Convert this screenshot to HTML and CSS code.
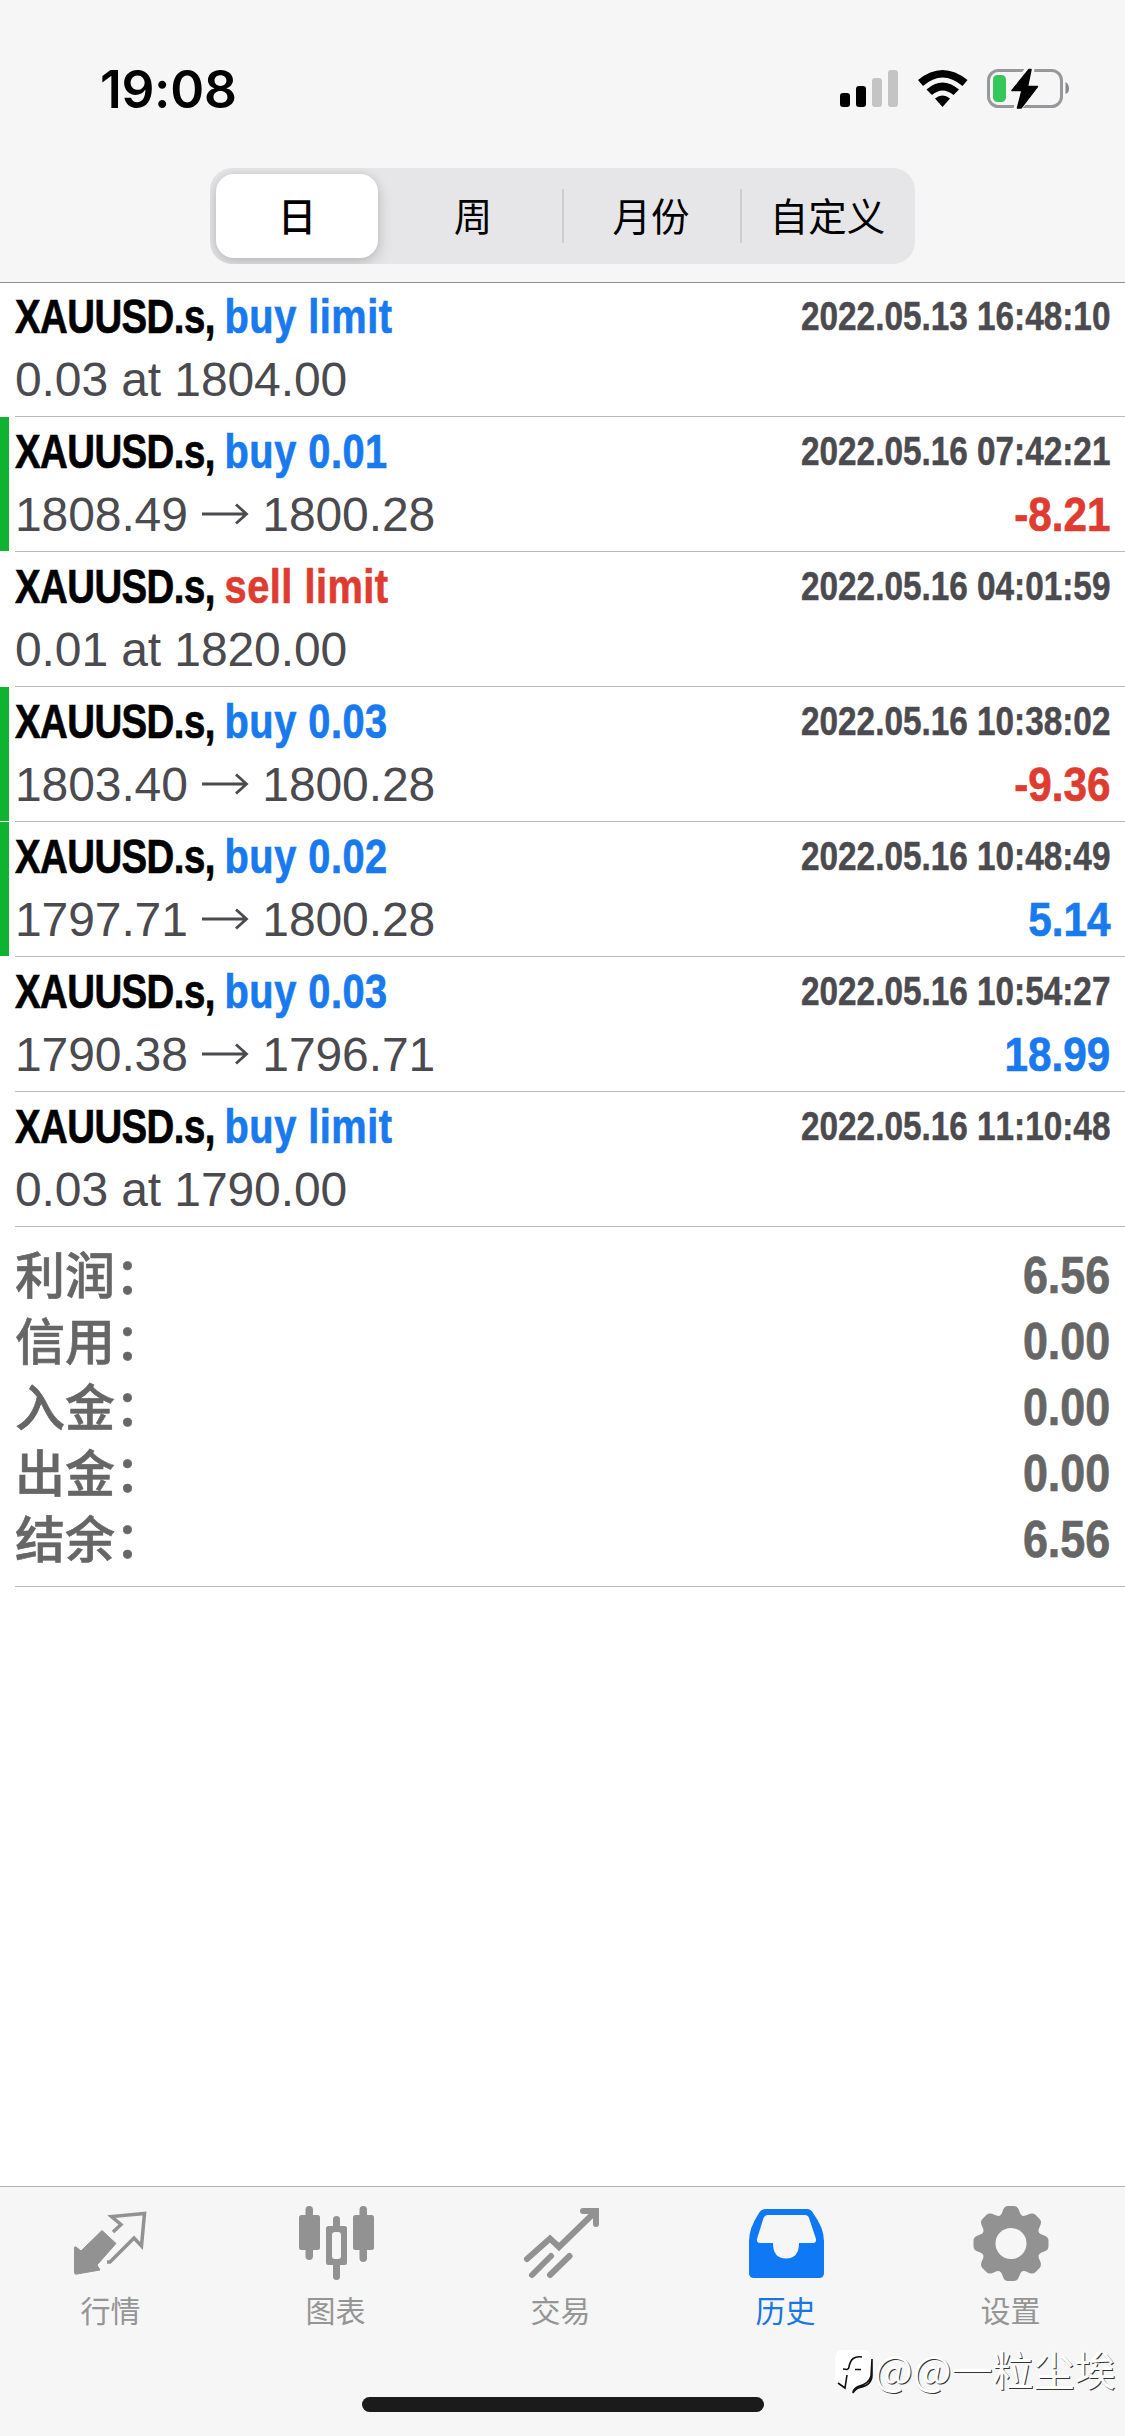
FILE: index.html
```html
<!DOCTYPE html>
<html lang="zh-CN">
<head>
<meta charset="utf-8">
<title>历史</title>
<link rel="stylesheet" href="styles.css">
</head>
<body>
<div class="screen">
  <header class="top">
    <div class="status">
      <span class="clock">19:08</span>
      <svg class="status-icons" width="232" height="48" viewBox="838 66 232 48">
        <rect x="840" y="93" width="10" height="14" rx="3"/>
        <rect x="856" y="86" width="10" height="21" rx="3"/>
        <rect x="872" y="78" width="10" height="29" rx="3" fill="#c4c4c5"/>
        <rect x="888" y="70" width="10" height="37" rx="3" fill="#c4c4c5"/>
        <path d="M918 80Q942.500 60 967.500 80L962.500 86Q942.500 69 923 86Z"/>
        <path d="M926.500 89.500Q942.500 75.500 959 89.500L953.500 95Q942.500 86 932 95Z"/>
        <path d="M935 98.500Q942.500 92.500 950 98.500L942.500 107Z"/>
        <rect x="988.500" y="70.500" width="73" height="36" rx="10" fill="none" stroke="#98989b" stroke-width="3"/>
        <path d="M1065.500 82Q1069 84 1069 88.500T1065.500 94Z" fill="#88888a"/>
        <path d="M1029 69L1012 91H1021L1017 109L1038 86H1029L1031 69Z" fill="#f6f6f6" stroke="#f6f6f6" stroke-width="7"/>
        <rect x="993" y="75" width="13" height="27" rx="4.500" fill="#35c759"/>
        <path d="M1029 69.500L1012 90.500H1022L1017.500 108H1021L1037.500 86.500H1027.500L1031 69.500Z" stroke="#000" stroke-width="1.500" stroke-linejoin="round"/>
      </svg>
    </div>
    <nav class="segments">
      <span class="seg on">日</span><span class="seg">周</span><span class="seg line">月份</span><span class="seg line">自定义</span>
    </nav>
  </header>

  <main class="list">
    <div class="deal"><div class="row"><div class="title"><b>XAUUSD.s, </b><i class="buy">buy limit</i></div><time>2022.05.13 16:48:10</time></div><div class="row"><span class="price">0.03 at 1804.00</span></div></div>
    <div class="deal mark"><div class="row"><div class="title"><b>XAUUSD.s, </b><i class="buy">buy 0.01</i></div><time>2022.05.16 07:42:21</time></div><div class="row"><span class="price">1808.49 <svg class="arrow" width="48" height="22" viewBox="0 0 48 22"><path d="M1 11H46M35 1.500L45.500 11L35 20.500"/></svg> 1800.28</span><em class="loss">-8.21</em></div></div>
    <div class="deal"><div class="row"><div class="title"><b>XAUUSD.s, </b><i class="sell">sell limit</i></div><time>2022.05.16 04:01:59</time></div><div class="row"><span class="price">0.01 at 1820.00</span></div></div>
    <div class="deal mark"><div class="row"><div class="title"><b>XAUUSD.s, </b><i class="buy">buy 0.03</i></div><time>2022.05.16 10:38:02</time></div><div class="row"><span class="price">1803.40 <svg class="arrow" width="48" height="22" viewBox="0 0 48 22"><path d="M1 11H46M35 1.500L45.500 11L35 20.500"/></svg> 1800.28</span><em class="loss">-9.36</em></div></div>
    <div class="deal mark"><div class="row"><div class="title"><b>XAUUSD.s, </b><i class="buy">buy 0.02</i></div><time>2022.05.16 10:48:49</time></div><div class="row"><span class="price">1797.71 <svg class="arrow" width="48" height="22" viewBox="0 0 48 22"><path d="M1 11H46M35 1.500L45.500 11L35 20.500"/></svg> 1800.28</span><em>5.14</em></div></div>
    <div class="deal"><div class="row"><div class="title"><b>XAUUSD.s, </b><i class="buy">buy 0.03</i></div><time>2022.05.16 10:54:27</time></div><div class="row"><span class="price">1790.38 <svg class="arrow" width="48" height="22" viewBox="0 0 48 22"><path d="M1 11H46M35 1.500L45.500 11L35 20.500"/></svg> 1796.71</span><em>18.99</em></div></div>
    <div class="deal"><div class="row"><div class="title"><b>XAUUSD.s, </b><i class="buy">buy limit</i></div><time>2022.05.16 11:10:48</time></div><div class="row"><span class="price">0.03 at 1790.00</span></div></div>
    <div class="summary">
      <div class="sum"><span>利润：</span><strong>6.56</strong></div>
      <div class="sum"><span>信用：</span><strong>0.00</strong></div>
      <div class="sum"><span>入金：</span><strong>0.00</strong></div>
      <div class="sum"><span>出金：</span><strong>0.00</strong></div>
      <div class="sum"><span>结余：</span><strong>6.56</strong></div>
    </div>
  </main>

  <footer class="bottom">
    <nav class="tabs">
      <div class="tab"><svg width="80" height="80" viewBox="72 2203 80 80">
        <path d="M77 2247L82 2251L103 2230.500L117 2243.500L98 2265L101 2270L78 2274Q75.500 2275 75.500 2272V2247Z" fill="#929292" stroke="#929292" stroke-width="1"/>
        <path d="M114 2232L122 2224.500L112.500 2216.500L145.500 2213.500L142.500 2246L135 2238L111 2262H108" fill="none" stroke="#929292" stroke-width="3.500"/>
      </svg><span>行情</span></div>
      <div class="tab"><svg width="80" height="80" viewBox="296 2203 80 80" fill="#929292">
        <rect x="305.500" y="2206" width="7.500" height="54" rx="3.700"/><rect x="299" y="2215" width="21" height="35" rx="2.500"/>
        <rect x="359.500" y="2206" width="7.500" height="56" rx="3.700"/><rect x="353" y="2215" width="21" height="35" rx="2.500"/>
        <rect x="333" y="2216" width="7" height="64" rx="3.500"/><rect x="326" y="2226" width="21" height="39" rx="2.500"/><rect x="332" y="2232" width="9" height="27" rx="3" fill="#f6f6f6"/>
      </svg><span>图表</span></div>
      <div class="tab"><svg width="80" height="80" viewBox="521 2203 80 80" fill="none" stroke="#929292" stroke-width="6" stroke-linecap="round">
        <path d="M527 2259L550 2238.500L559 2247L595 2212"/><path d="M583 2211H596V2224"/>
        <path d="M551 2256L532 2275"/><path d="M569.500 2256L550 2275"/>
      </svg><span>交易</span></div>
      <div class="tab active"><svg width="80" height="80" viewBox="746 2203 80 80">
        <path fill-rule="evenodd" fill="#0e78f5" d="M766 2209H807Q811 2209 813 2213Q824 2228 824 2241V2273Q824 2278 819 2278H754Q749 2278 749 2273V2241Q749 2228 759 2213Q761 2209 766 2209ZM768 2215Q765 2215 763.500 2218L757 2239Q756.500 2243 760 2243H773Q773 2258.500 786 2258.500T799 2243H813Q816.500 2243 816 2239L809 2218Q808 2215 805 2215Z"/>
      </svg><span>历史</span></div>
      <div class="tab"><svg width="80" height="80" viewBox="-40 -40.500 80 80" fill="#929292">
        <circle r="29.500"/>
        <path id="t" d="M-14 -26Q-9.500 -28 -8.500 -32Q-7 -37.500 -3 -37.500H3Q7 -37.500 8.500 -32Q9.500 -28 14 -26Z"/>
        <use href="#t" transform="rotate(45)"/><use href="#t" transform="rotate(90)"/><use href="#t" transform="rotate(135)"/><use href="#t" transform="rotate(180)"/><use href="#t" transform="rotate(225)"/><use href="#t" transform="rotate(270)"/><use href="#t" transform="rotate(315)"/>
        <circle r="15.500" fill="#f6f6f6"/>
      </svg><span>设置</span></div>
    </nav>
    <div class="home"></div>
    <div class="watermark"><svg width="42" height="48" viewBox="0 0 42 48">
      <path d="M10 2H30Q39 2 39 11V27Q39 37 26 39L20 45V37L12 40Q2 36 2 28V11Q2 2 10 2Z" fill="#fff"/>
      <path d="M39 11V27Q39 37 27 39.500Q22 41 20 45Q20 41 25 38.500Q36 36 38 28ZM29 9Q18 7 16 19Q16 21 14 21.500L10 21M22 21.500H28M14 27L12 40L5 35" fill="none" stroke="#111" stroke-width="1.600"/>
    </svg><span>@@一粒尘埃</span></div>
  </footer>
</div>
</body>
</html>
```
FILE: styles.css
```css
* { box-sizing: border-box; }
body { margin: 0; background: #fff; font-family: "Liberation Sans", "Noto Sans CJK SC", sans-serif; }
.screen { width: 1125px; height: 2436px; display: flex; flex-direction: column; overflow: hidden; }
.top { height: 283px; background: #f6f6f6; border-bottom: 1px solid #8e8e8f; flex: none; }
.status { height: 168px; padding: 65px 55px 0 100px; display: flex; justify-content: space-between; align-items: flex-start; }
.clock { font: 600 51.5px/48px Inter, sans-serif; letter-spacing: -.3px; }
.status-icons { margin-top: 1px; }
.segments { width: 705px; height: 96px; margin-left: 210px; padding: 6px 0 6px 6px; border-radius: 22px; background: #e6e6e8; display: grid; grid-template-columns: 168px 178px 178px 1fr; overflow: hidden; }
.seg { display: flex; align-items: center; justify-content: center; font: 400 38.5px/80px "Noto Sans CJK SC", sans-serif; color: #000; position: relative; padding-bottom: 4px; }
.seg.on { margin-right: 6px; background: #fff; border-radius: 18px; font-weight: 500; box-shadow: 0 6px 16px rgba(0,0,0,.16), 0 0 8px rgba(0,0,0,.08); }
.seg.line::before { content: ""; position: absolute; left: 0; top: 15px; width: 2px; height: 54px; background: #cdcdd0; }
.list { flex: 1; margin-top: -1px; }
.deal { height: 135px; padding: 6px 15px 0; position: relative; }
.deal::after, .summary::after { content: ""; position: absolute; left: 15px; right: 0; bottom: 0; height: 1px; background: #b9b9bb; }
.mark::before { content: ""; position: absolute; left: 0; top: 0; width: 9px; height: 134px; background: #0fb32f; }
.row { height: 63px; display: flex; justify-content: space-between; white-space: nowrap; }
.title { font-weight: 700; font-size: 48px; line-height: 58px; transform: scaleX(.8); transform-origin: left; white-space: pre; -webkit-text-stroke: .7px; }
.title b { letter-spacing: -.7px; }
.title i { display: inline-block; font-style: normal; letter-spacing: .6px; transform: scaleX(1.035); transform-origin: left; }
.buy, em { color: #187aee; }
.sell, .loss { color: #df3c31; }
time { font-weight: 700; font-size: 40px; line-height: 56px; color: #4b4a4f; transform: scaleX(.833); transform-origin: right; font-kerning: none; -webkit-text-stroke: .5px; }
.price { font-size: 48px; line-height: 57px; color: #4b4a4f; white-space: pre; font-kerning: none; letter-spacing: -.1px; }
.arrow { fill: none; stroke: #4b4a4f; stroke-width: 2.8; vertical-align: 6px; }
em, strong { font-style: normal; font-weight: 700; font-size: 48px; line-height: 57px; transform: scaleX(.88); transform-origin: right; -webkit-text-stroke: .7px; }
.summary { position: relative; height: 360px; padding: 17px 15px 0; color: #666; }
.sum { height: 66px; display: flex; justify-content: space-between; }
.sum span { font: 500 50px/56px "Noto Sans CJK SC", sans-serif; -webkit-text-stroke: .6px; }
.sum strong { font-size: 51px; line-height: 64px; }
.bottom { height: 250px; flex: none; background: #f6f6f6; border-top: 1px solid #b0b0b0; position: relative; }
.tabs { display: grid; grid-template-columns: repeat(5, 225px); padding-top: 16px; margin-left: -2px; }
.tab { display: flex; flex-direction: column; align-items: center; color: #959595; }
.tab span { font: 400 30px/40px "Noto Sans CJK SC", sans-serif; margin-top: 6px; }
.tab svg { display: block; }
.tab.active { color: #1a76e2; }
.home { position: absolute; left: 362px; top: 210px; width: 402px; height: 15px; border-radius: 8px; background: #1b1b1b; }
.watermark { position: absolute; left: 833px; top: 161px; display: flex; align-items: flex-start; white-space: nowrap; }
.watermark span { font: 400 41px/50px "Noto Sans CJK SC", sans-serif; margin: -5px 0 0 -1px; color: #fff; text-shadow: 1px 1px 0 #333; }
```
